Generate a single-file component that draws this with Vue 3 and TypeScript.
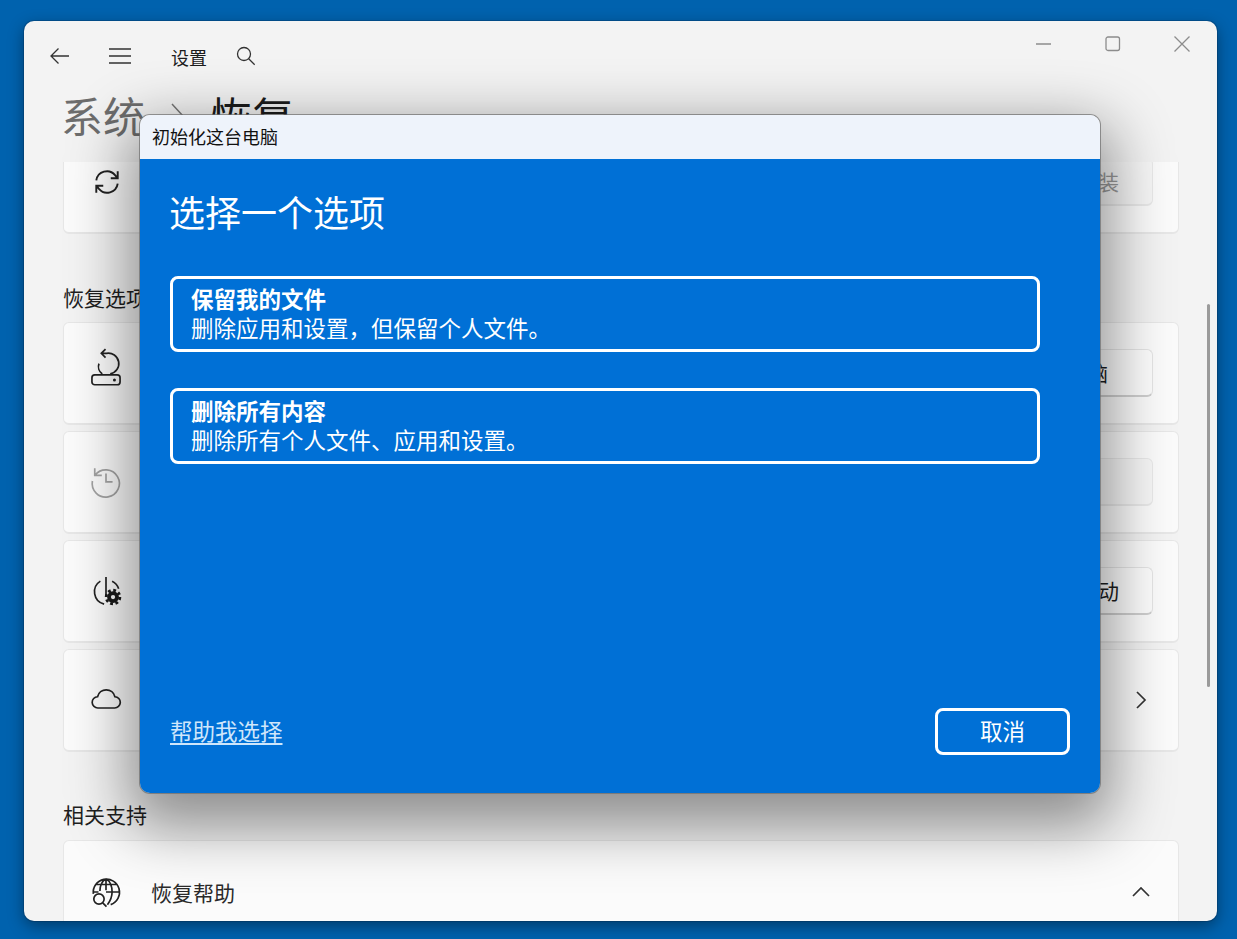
<script setup lang="ts">
interface Row { id: string; btn?: string; wide?: boolean; disabled?: boolean; chevron?: boolean }
const rows: Row[] = [
  { id: 'drive', btn: '初始化电脑', wide: true },
  { id: 'history', btn: '', disabled: true },
  { id: 'power', btn: '立即重新启动' },
  { id: 'cloud', chevron: true },
]
</script>

<template>
  <div class="desktop">
    <div class="window">
      <header class="titlebar">
        <svg class="ico back" width="22" height="18" viewBox="0 0 22 18"><path d="M20 9H2M9.500 1.500 2 9l7.500 7.500" /></svg>
        <svg class="ico menu" width="24" height="18" viewBox="0 0 24 18"><path d="M1 2h22M1 9h22M1 16h22" /></svg>
        <span class="app-title">设置</span>
        <svg class="ico search" width="20" height="20" viewBox="0 0 20 20"><circle cx="8" cy="8" r="6.500" /><path d="m12.700 12.700 6 6" /></svg>
        <div class="controls">
          <div class="ctl"><svg width="16" height="16" viewBox="0 0 16 16"><path d="M0 8h15" /></svg></div>
          <div class="ctl"><svg width="16" height="16" viewBox="0 0 16 16"><rect x="1" y="1" width="13.500" height="13.500" rx="2" /></svg></div>
          <div class="ctl"><svg width="16" height="16" viewBox="0 0 16 16"><path d="m.5.500 15 15M15.500.500l-15 15" /></svg></div>
        </div>
      </header>

      <div class="crumb">
        <span class="crumb-parent">系统</span>
        <svg class="crumb-sep" width="14" height="26" viewBox="0 0 14 26"><path d="m1 1 11 12L1 25" /></svg>
        <span class="crumb-current">恢复</span>
      </div>

      <main class="scroll">
        <div class="scroll-inner">
          <section class="card">
            <svg class="row-ico refresh" width="28" height="28" viewBox="0 0 28 28"><path d="M4 12.500A10 10 0 0 1 21.500 7.500l2 2.500M24 15.500A10 10 0 0 1 6.500 20.500l-2-2.500M24 4v6.500h-6.500M4 24v-6.500h6.500" /></svg>
            <button class="btn disabled">重新安装</button>
          </section>

          <h2 class="section-title">恢复选项</h2>
          <div class="stack">
            <section v-for="r in rows" :key="r.id" class="card" :class="{ muted: r.disabled }">
              <svg v-if="r.id === 'drive'" class="row-ico" width="32" height="32" viewBox="0 0 32 32">
                <rect x="1" y="18" width="30" height="10.500" rx="3" />
                <path d="M11 -5H16.500A9.500 9.500 0 0 1 20.500 17M15.500 -9.500 11 -5l4.500 4.500M8.500 6A9.500 9.500 0 0 0 12 17" />
                <circle cx="25" cy="23.500" r="1.600" class="fill" />
              </svg>
              <svg v-else-if="r.id === 'history'" class="row-ico" width="32" height="32" viewBox="0 0 32 32">
                <path d="M4 2.500V10h7.500M4.500 9.500A14.500 14.500 0 1 1 1.500 16M16 8v9h7" />
              </svg>
              <svg v-else-if="r.id === 'power'" class="row-ico" width="32" height="32" viewBox="0 0 32 32">
                <path d="M16 1v20M10 5.500A13.500 13.500 0 0 0 14 30M22.500 5.500a13.500 13.500 0 0 1 7 8" />
                <circle cx="23.500" cy="22.500" r="4.300" class="gear" />
                <circle cx="23.500" cy="22.500" r="7.300" class="teeth" />
              </svg>
              <svg v-else class="row-ico" width="32" height="32" viewBox="0 0 32 32">
                <path d="M7.500 24.500H25a6 6 0 0 0 .5-12A9.500 9.500 0 0 0 7 12.500a6 6 0 0 0 .5 12Z" />
              </svg>
              <button v-if="r.btn !== undefined" class="btn" :class="{ wide: r.wide, disabled: r.disabled }">{{ r.btn }}</button>
              <svg v-if="r.chevron" class="chev" width="12" height="18" viewBox="0 0 12 18"><path d="m2 1 8 8-8 8" /></svg>
            </section>
          </div>

          <h2 class="section-title support">相关支持</h2>
          <section class="card help">
            <svg class="row-ico" width="32" height="32" viewBox="0 0 32 32">
              <path d="M2.500 18A14 14 0 1 1 21 29.500M4.500 8h23M2 16h6M16 16h14M16 2v12M16 2c-5 3-6.500 8-6.500 13M16 2c5 3 6.500 8 6.500 14 0 5-1.500 9-5 13.500" />
              <circle cx="8.500" cy="23.500" r="5.500" /><path d="m12.500 27.500 4 4" />
            </svg>
            <span class="row-label">恢复帮助</span>
            <svg class="chev up" width="18" height="12" viewBox="0 0 18 12"><path d="m1 10 8-8 8 8" /></svg>
          </section>
        </div>
      </main>
      <div class="scrollbar"></div>

      <div class="dialog">
        <div class="dialog-head">初始化这台电脑</div>
        <div class="dialog-body">
          <h1>选择一个选项</h1>
          <button class="option">
            <strong>保留我的文件</strong>
            <span>删除应用和设置，但保留个人文件。</span>
          </button>
          <button class="option">
            <strong>删除所有内容</strong>
            <span>删除所有个人文件、应用和设置。</span>
          </button>
          <div class="dialog-foot">
            <a class="link">帮助我选择</a>
            <button class="cancel">取消</button>
          </div>
        </div>
      </div>
    </div>
  </div>
</template>

<style>
html, body { margin: 0; background: #0063b1; }
</style>

<style scoped>
.desktop {
  width: 1237px;
  height: 939px;
  padding: 21px 20px 18px 24px;
  box-sizing: border-box;
  background: #0062ae;
  font-family: "Noto Sans CJK SC", "Noto Sans", sans-serif;
  overflow: hidden;
}
.window {
  position: relative;
  width: 1193px;
  height: 900px;
  background: #f3f3f3;
  border-radius: 10px;
  overflow: hidden;
  display: flex;
  flex-direction: column;
  box-shadow: 0 5px 16px rgba(0, 0, 0, .4), 0 0 0 1px rgba(0, 40, 80, .25);
}
svg { fill: none; stroke: #222; stroke-width: 1.800; flex: none; overflow: visible; }
.titlebar {
  height: 70px;
  flex: none;
  display: flex;
  align-items: center;
  padding-left: 25px;
}
.ico { stroke: #333; stroke-width: 1.300; }
.menu { margin-left: 37px; }
.app-title { margin-left: 39px; font-size: 18px; color: #1c1c1c; line-height: 24px; margin-top: 2px; }
.search { margin-left: 29px; margin-top: -1px; }
.controls { margin-left: auto; margin-right: 1px; display: flex; align-self: flex-start; }
.ctl { width: 69px; height: 46px; display: flex; align-items: center; justify-content: center; }
.ctl svg { stroke: #8c8c8c; stroke-width: 1.300; }
.crumb {
  height: 71px;
  flex: none;
  display: flex;
  align-items: flex-start;
  padding-left: 37px;
  font-size: 42px;
  line-height: 48px;
}
.crumb-parent { color: #6d6d6d; }
.crumb-sep { margin: 12px 25px 0 26px; stroke: #777; stroke-width: 1.500; }
.crumb-current { color: #1b1b1b; }
.scroll { flex: 1; min-height: 0; overflow: hidden; padding: 0 38px 0 39px; }
.scroll-inner { margin-top: -31px; }
.card {
  height: 103px;
  box-sizing: border-box;
  background: #fbfbfb;
  border: 1px solid #e7e7e7;
  border-bottom-width: 2px;
  border-radius: 6px;
  display: flex;
  align-items: center;
  padding: 0 25px 0 27px;
}
.row-ico { width: 30px; height: 30px; }
.refresh { margin-left: 1px; }
.muted .row-ico { stroke: #a3a3a3; margin-top: -3px; }
.fill { fill: #1f1f1f; stroke: none; }
.gear { stroke: #1a1a1a; stroke-width: 4; }
.teeth { stroke: #1a1a1a; stroke-width: 3; stroke-dasharray: 3 2.730; }
.row-label { margin-left: 30px; font-size: 21px; color: #2a2a2a; }
.btn {
  margin-left: auto;
  height: 48px;
  min-width: 120px;
  padding: 0 33px 2px;
  font: inherit;
  font-size: 21px;
  color: #1d1d1d;
  background: #fdfdfd;
  border: 1px solid #e5e5e5;
  border-bottom: 2px solid #cfcfcf;
  border-radius: 6px;
}
.btn.wide { padding: 0 44px 2px; }
.btn.disabled { color: #9b9b9b; background: #f7f7f7; border-color: #e9e9e9; }
.chev { margin-left: auto; margin-right: 6px; stroke: #333; stroke-width: 1.700; }
.chev.up { margin-right: 3px; }
.section-title {
  margin: 50px 0 11px;
  font-size: 21px;
  font-weight: 400;
  line-height: 27px;
  color: #1f1f1f;
}
.stack { display: flex; flex-direction: column; gap: 6px; }
.section-title.support { margin: 49px 0 12px; }
.help { height: 104px; }
.scrollbar {
  position: absolute;
  right: 7px;
  top: 283px;
  width: 3px;
  height: 383px;
  border-radius: 2px;
  background: #9a9a9a;
}
.dialog {
  position: absolute;
  left: 116px;
  top: 94px;
  width: 960px;
  height: 678px;
  border-radius: 10px;
  overflow: hidden;
  display: flex;
  flex-direction: column;
  box-shadow: 0 0 0 1px rgba(110, 110, 110, .7), 0 22px 60px 12px rgba(0, 0, 0, .42);
}
.dialog-head {
  height: 44px;
  flex: none;
  box-sizing: border-box;
  padding: 0 12px 3px;
  display: flex;
  align-items: center;
  background: #eef3fb;
  font-size: 18px;
  color: #111;
}
.dialog-body {
  flex: 1;
  display: flex;
  flex-direction: column;
  align-items: flex-start;
  background: #0070d6;
  padding: 0 30px 38px;
  color: #fff;
}
h1 {
  margin: 26px 0 39px -1px;
  font-size: 36px;
  font-weight: 400;
  line-height: 52px;
}
.option {
  width: 870px;
  height: 76px;
  margin-bottom: 36px;
  box-sizing: border-box;
  padding: 0 18px 2px;
  background: transparent;
  border: 3px solid #fff;
  border-radius: 8px;
  color: #fff;
  font: inherit;
  font-size: 22.500px;
  line-height: 29px;
  display: flex;
  flex-direction: column;
  align-items: flex-start;
  justify-content: center;
}
.option strong { font-weight: 700; }
.dialog-foot {
  margin-top: auto;
  width: 900px;
  display: flex;
  justify-content: space-between;
  align-items: center;
}
.link { font-size: 22.500px; color: #cfe6fb; text-decoration: underline; text-underline-offset: 3px; margin-top: -4px; }
.cancel {
  width: 135px;
  height: 47px;
  padding: 0 0 4px;
  background: transparent;
  border: 3px solid #fff;
  border-radius: 8px;
  color: #fff;
  font: inherit;
  font-size: 22.500px;
}
</style>
